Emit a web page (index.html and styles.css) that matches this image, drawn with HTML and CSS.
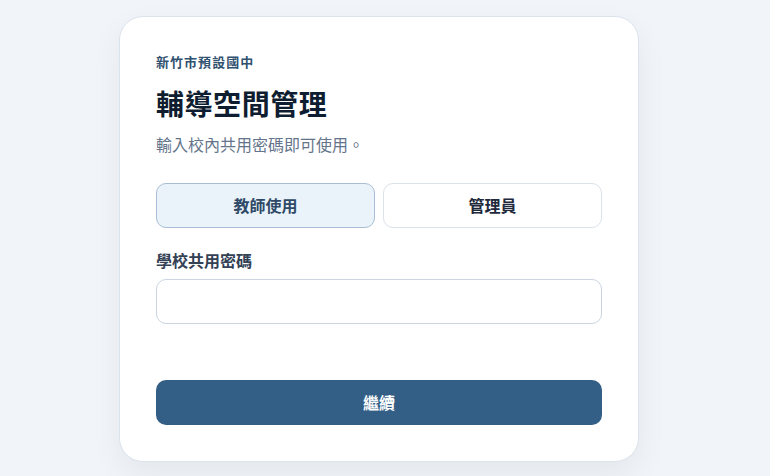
FILE: index.html
```html
<!DOCTYPE html>
<html lang="zh-Hant">
<head>
    <meta charset="utf-8">
    <title>輔導空間管理</title>
    <link rel="stylesheet" href="styles.css">
</head>
<body>
    <main class="login-card">
        <div class="school-name">新竹市預設國中</div>
        <h1 class="title">輔導空間管理</h1>
        <p class="subtitle">輸入校內共用密碼即可使用。</p>
        <div class="role-toggle">
            <button type="button" class="role-button active">教師使用</button>
            <button type="button" class="role-button">管理員</button>
        </div>
        <label class="field-label" for="password">學校共用密碼</label>
        <input type="password" id="password" class="field-input">
        <button type="button" class="submit-button">繼續</button>
    </main>
</body>
</html>
```

FILE: styles.css
```css
* {
    box-sizing: border-box;
}

body {
    margin: 0;
    padding: 1px 12px 0 0;
    min-height: 476px;
    display: flex;
    align-items: center;
    justify-content: center;
    background-color: #f1f5f9;
    font-family: "Noto Sans CJK TC", "Noto Sans", sans-serif;
}

.login-card {
    width: 520px;
    padding: 36px;
    background-color: #ffffff;
    border: 1px solid #dbe3ec;
    border-radius: 24px;
    box-shadow: 0 12px 32px rgba(15, 23, 42, 0.06);
    display: flex;
    flex-direction: column;
}

.school-name {
    font-size: 13px;
    line-height: 18px;
    font-weight: 700;
    letter-spacing: 0.08em;
    color: #30516f;
}

.title {
    margin: 14px 0 0;
    font-size: 28px;
    line-height: 36px;
    font-weight: 700;
    letter-spacing: 0.02em;
    color: #0f1d31;
}

.subtitle {
    margin: 11px 0 0;
    font-size: 16px;
    line-height: 24px;
    color: #64748b;
}

.role-toggle {
    margin-top: 27px;
    display: grid;
    grid-template-columns: 1fr 1fr;
    gap: 8px;
}

.role-button {
    height: 45px;
    font-family: inherit;
    font-size: 16px;
    font-weight: 700;
    color: #1e293b;
    background-color: #ffffff;
    border: 1px solid #dbe2ea;
    border-radius: 10px;
    cursor: pointer;
}

.role-button.active {
    background-color: #eaf2fa;
    border-color: #a9bed4;
    color: #2f4a66;
}

.field-label {
    margin-top: 21px;
    font-size: 16px;
    line-height: 22px;
    font-weight: 700;
    color: #334155;
}

.field-input {
    margin-top: 8px;
    height: 45px;
    padding: 0 14px;
    font-family: inherit;
    font-size: 16px;
    border: 1px solid #cbd5e1;
    border-radius: 10px;
    outline: none;
}

.submit-button {
    margin-top: 56px;
    height: 45px;
    font-family: inherit;
    font-size: 16px;
    font-weight: 700;
    color: #ffffff;
    background-color: #335f87;
    border: none;
    border-radius: 10px;
    cursor: pointer;
}
```
